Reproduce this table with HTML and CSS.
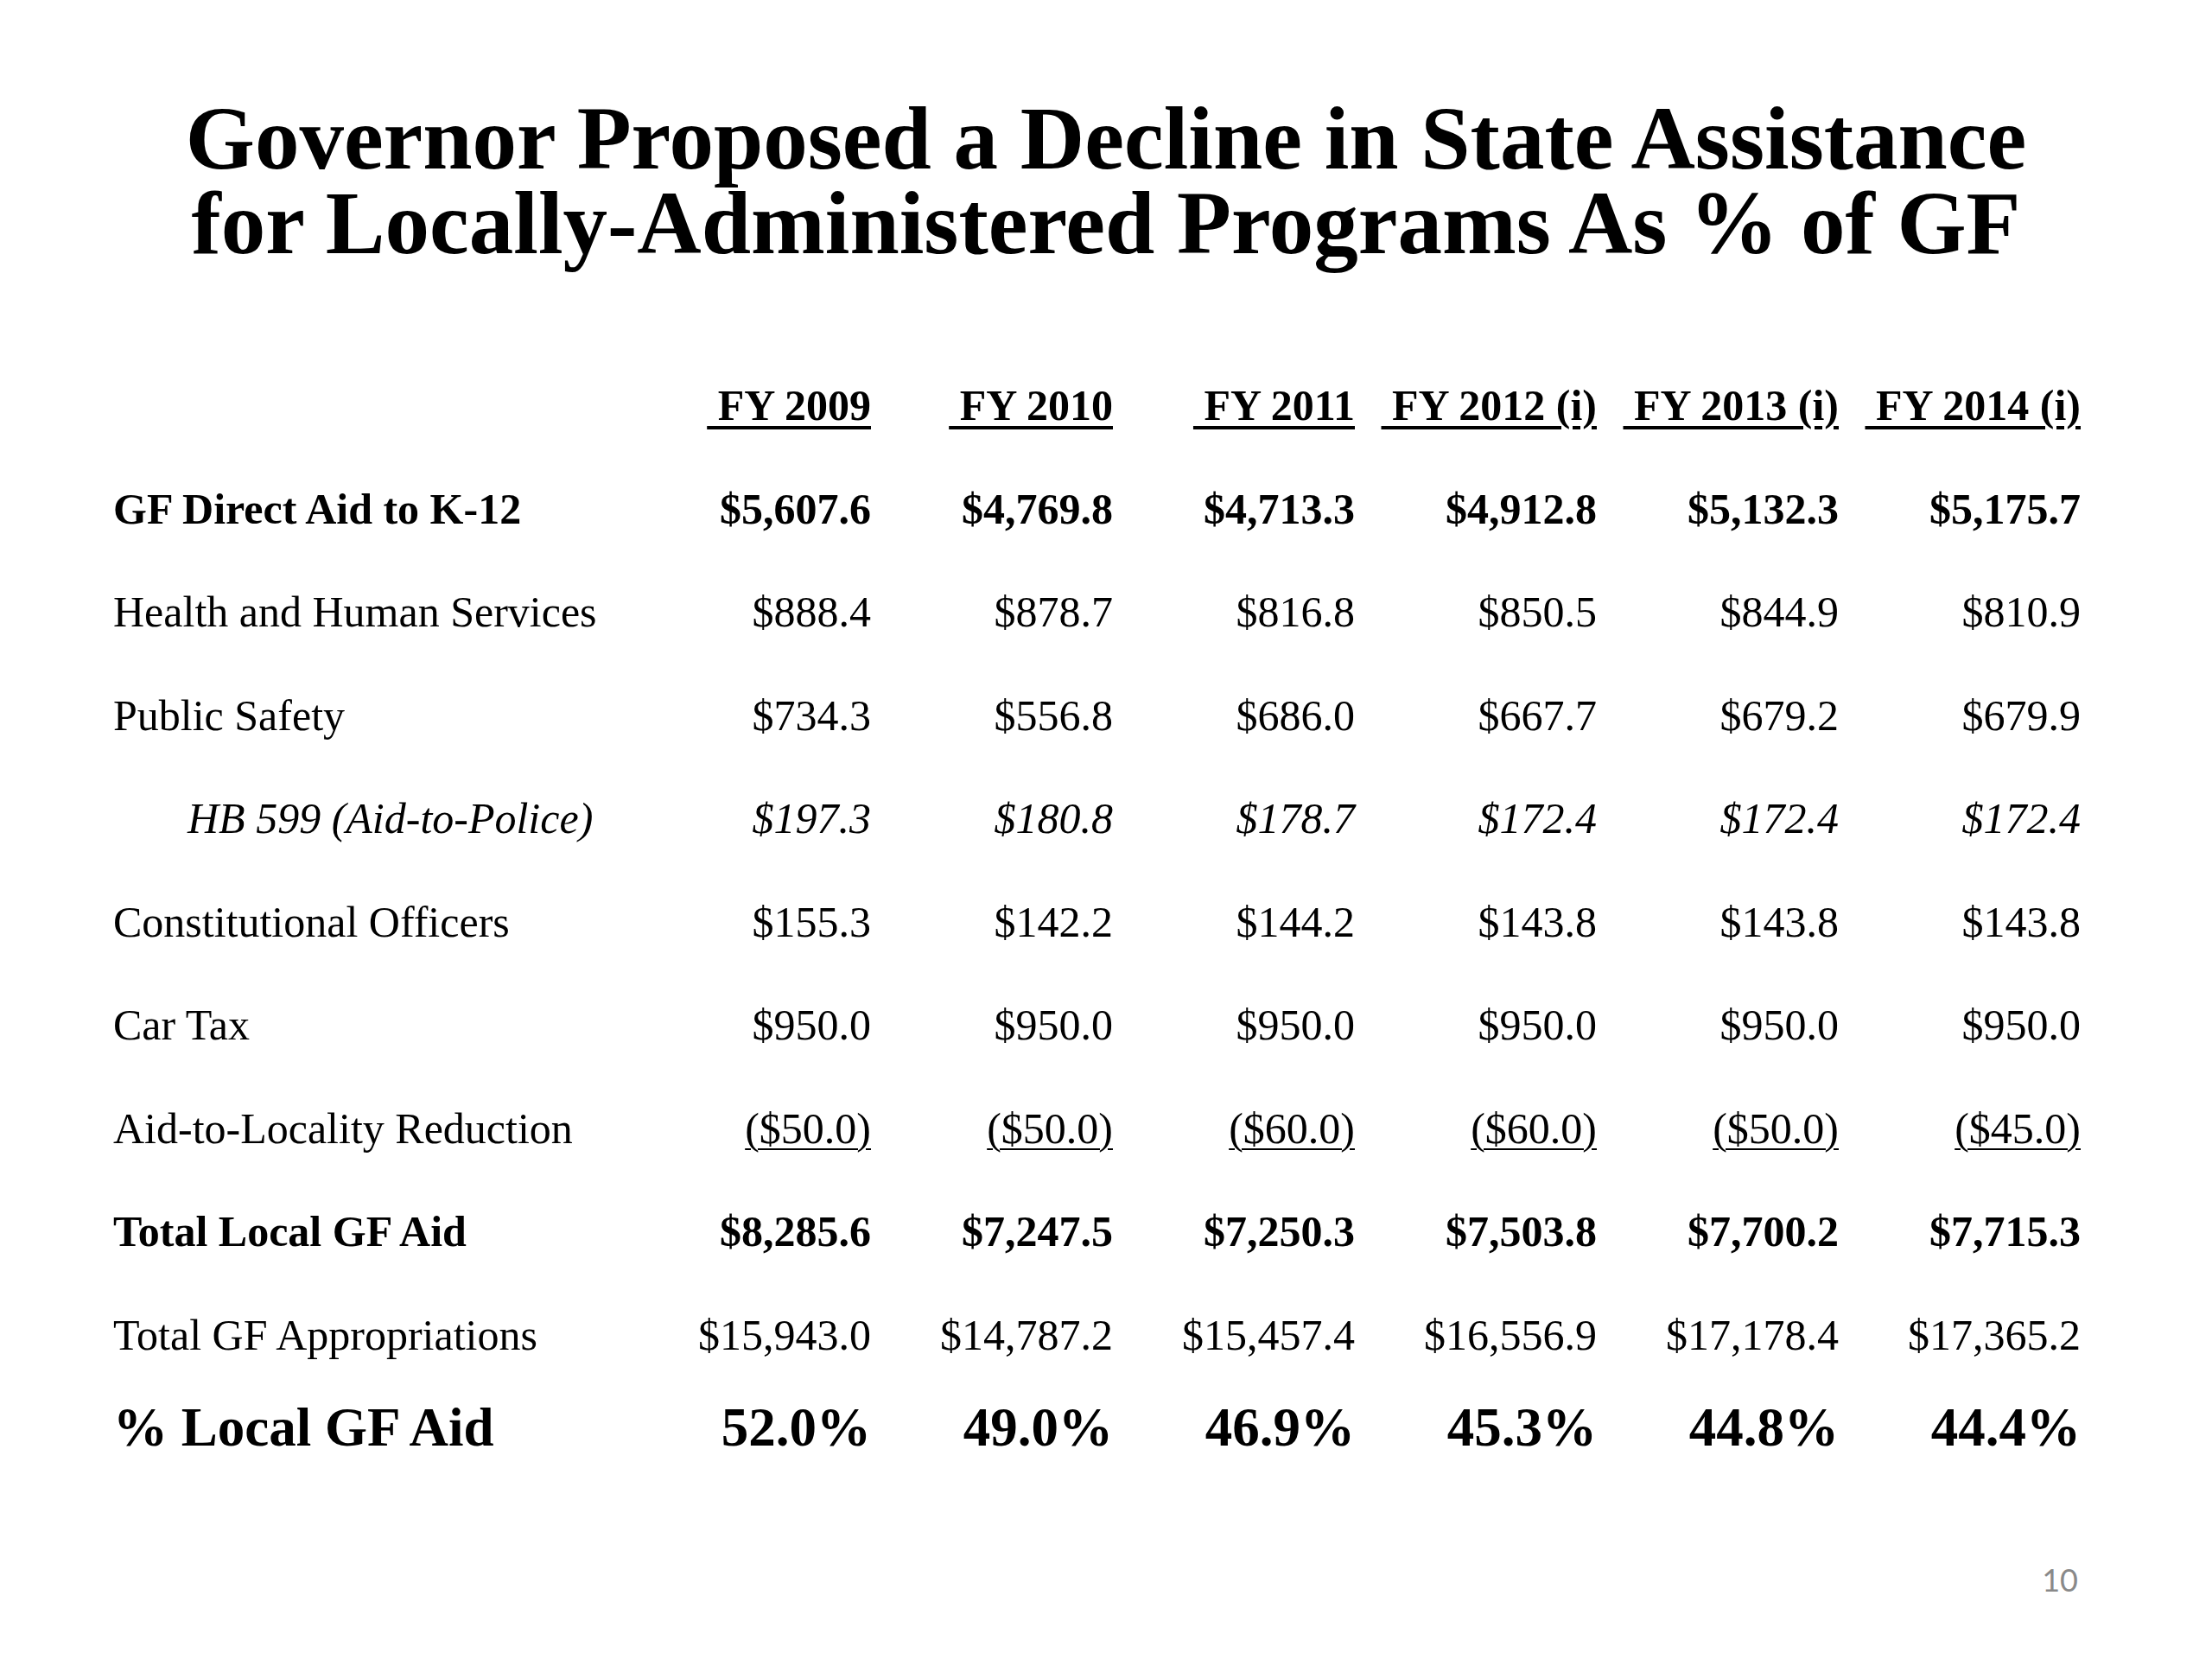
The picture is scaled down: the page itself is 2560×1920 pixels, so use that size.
FILE: index.html
```html
<!DOCTYPE html>
<html lang="en">
<head>
<meta charset="utf-8">
<title>Governor Proposed a Decline in State Assistance</title>
<link rel="stylesheet" href="styles.css">
</head>
<body>
<div class="slide">
  <h1 class="title"><span class="tline">Governor Proposed a Decline in State Assistance</span><span class="tline">for Locally-Administered Programs As % of GF</span></h1>

  <div class="table">
    <div class="row head">
      <div class="label"></div>
      <div class="num"><span class="u">&nbsp;FY 2009</span></div>
      <div class="num"><span class="u">&nbsp;FY 2010</span></div>
      <div class="num"><span class="u">&nbsp;FY 2011</span></div>
      <div class="num"><span class="u">&nbsp;FY 2012 (i)</span></div>
      <div class="num"><span class="u">&nbsp;FY 2013 (i)</span></div>
      <div class="num"><span class="u">&nbsp;FY 2014 (i)</span></div>
    </div>
    <div class="row bold">
      <div class="label">GF Direct Aid to K-12</div>
      <div class="num">$5,607.6</div>
      <div class="num">$4,769.8</div>
      <div class="num">$4,713.3</div>
      <div class="num">$4,912.8</div>
      <div class="num">$5,132.3</div>
      <div class="num">$5,175.7</div>
    </div>
    <div class="row">
      <div class="label">Health and Human Services</div>
      <div class="num">$888.4</div>
      <div class="num">$878.7</div>
      <div class="num">$816.8</div>
      <div class="num">$850.5</div>
      <div class="num">$844.9</div>
      <div class="num">$810.9</div>
    </div>
    <div class="row">
      <div class="label">Public Safety</div>
      <div class="num">$734.3</div>
      <div class="num">$556.8</div>
      <div class="num">$686.0</div>
      <div class="num">$667.7</div>
      <div class="num">$679.2</div>
      <div class="num">$679.9</div>
    </div>
    <div class="row italic">
      <div class="label indent">HB 599 (Aid-to-Police)</div>
      <div class="num">$197.3</div>
      <div class="num">$180.8</div>
      <div class="num">$178.7</div>
      <div class="num">$172.4</div>
      <div class="num">$172.4</div>
      <div class="num">$172.4</div>
    </div>
    <div class="row">
      <div class="label">Constitutional Officers</div>
      <div class="num">$155.3</div>
      <div class="num">$142.2</div>
      <div class="num">$144.2</div>
      <div class="num">$143.8</div>
      <div class="num">$143.8</div>
      <div class="num">$143.8</div>
    </div>
    <div class="row">
      <div class="label">Car Tax</div>
      <div class="num">$950.0</div>
      <div class="num">$950.0</div>
      <div class="num">$950.0</div>
      <div class="num">$950.0</div>
      <div class="num">$950.0</div>
      <div class="num">$950.0</div>
    </div>
    <div class="row">
      <div class="label">Aid-to-Locality Reduction</div>
      <div class="num"><span class="ul">($50.0)</span></div>
      <div class="num"><span class="ul">($50.0)</span></div>
      <div class="num"><span class="ul">($60.0)</span></div>
      <div class="num"><span class="ul">($60.0)</span></div>
      <div class="num"><span class="ul">($50.0)</span></div>
      <div class="num"><span class="ul">($45.0)</span></div>
    </div>
    <div class="row bold">
      <div class="label">Total Local GF Aid</div>
      <div class="num">$8,285.6</div>
      <div class="num">$7,247.5</div>
      <div class="num">$7,250.3</div>
      <div class="num">$7,503.8</div>
      <div class="num">$7,700.2</div>
      <div class="num">$7,715.3</div>
    </div>
    <div class="row">
      <div class="label">Total GF Appropriations</div>
      <div class="num">$15,943.0</div>
      <div class="num">$14,787.2</div>
      <div class="num">$15,457.4</div>
      <div class="num">$16,556.9</div>
      <div class="num">$17,178.4</div>
      <div class="num">$17,365.2</div>
    </div>
    <div class="row bold big">
      <div class="label">% Local GF Aid</div>
      <div class="num">52.0%</div>
      <div class="num">49.0%</div>
      <div class="num">46.9%</div>
      <div class="num">45.3%</div>
      <div class="num">44.8%</div>
      <div class="num">44.4%</div>
    </div>
  </div>

  <div class="footer"><span class="page-num">10</span></div>
</div>
</body>
</html>
```

FILE: styles.css
```css
html, body {
  margin: 0;
  padding: 0;
  background: #ffffff;
}

.slide {
  width: 2560px;
  height: 1920px;
  box-sizing: border-box;
  padding-top: 111px;
  font-family: "Liberation Serif", "Times New Roman", serif;
  color: #000000;
  display: flex;
  flex-direction: column;
}

.title {
  margin: 0;
  font-size: 103px;
  line-height: 98px;
  font-weight: bold;
  text-align: center;
  display: flex;
  flex-direction: column;
  align-items: center;
}

.tline {
  display: block;
  height: 98px;
}

.table {
  margin-top: 103px;
  margin-left: 131px;
  width: 2277px;
  display: flex;
  flex-direction: column;
}

.row {
  display: grid;
  grid-template-columns: 597px repeat(6, 280px);
  height: 119.5px;
  line-height: 119.5px;
  font-size: 50px;
  white-space: nowrap;
}

.row.bold {
  font-weight: bold;
}

.row.italic {
  font-style: italic;
}

.row.head {
  font-weight: bold;
}

.row.big {
  font-size: 63px;
  height: 94px;
  line-height: 94px;
}

.label {
  text-align: left;
}

.label.indent {
  padding-left: 86px;
}

.num {
  text-align: right;
}

.u {
  text-decoration: underline;
  text-decoration-thickness: 4px;
  text-underline-offset: 7px;
}

.ul {
  text-decoration: underline;
  text-decoration-thickness: 2px;
  text-underline-offset: 6px;
}

.footer {
  margin-top: 108px;
  padding-right: 155px;
  display: flex;
  justify-content: flex-end;
}

.page-num {
  font-family: Lato, "Open Sans", sans-serif;
  font-size: 36px;
  line-height: 43px;
  color: #898989;
}
```
